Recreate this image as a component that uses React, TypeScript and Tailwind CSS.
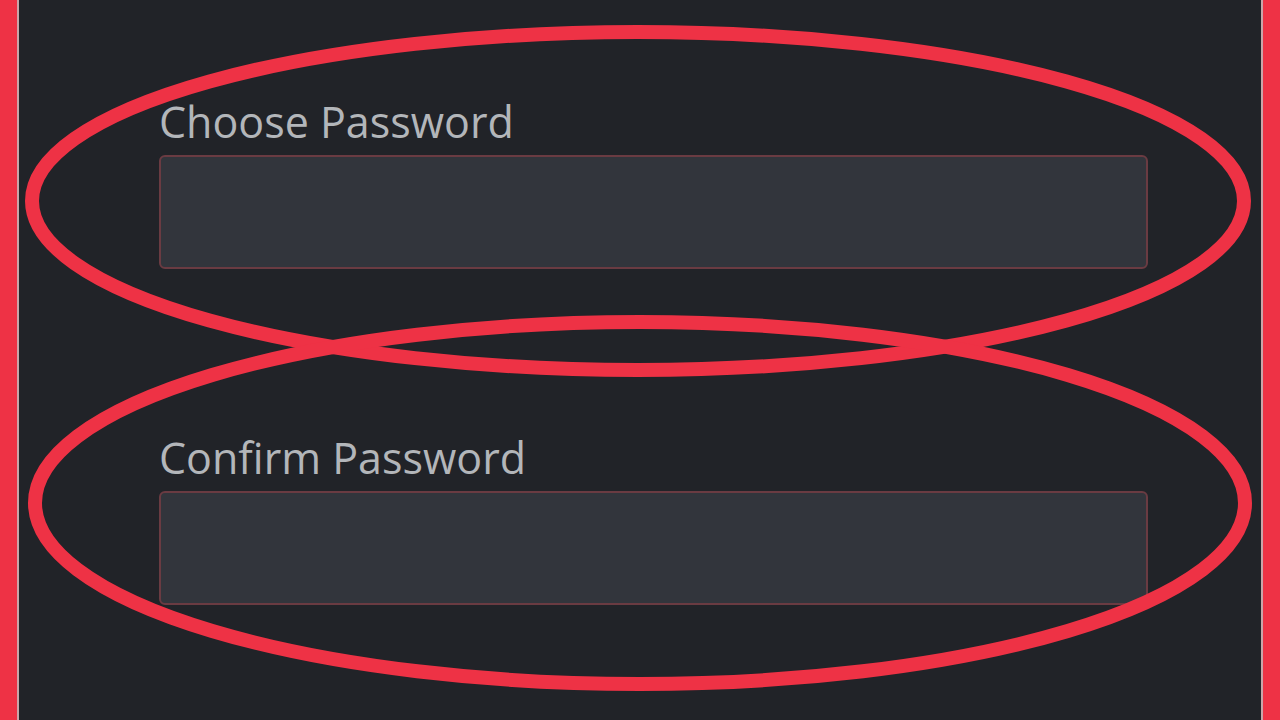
const Field = ({ label }: { label: string }) => (
  <div className="flex flex-col">
    <label className="text-[43px] leading-[48px] text-[#b3b6ba] font-['Open_Sans',sans-serif]">
      {label}
    </label>
    <div className="mt-[9px] h-[114px] w-[989px] rounded-[6px] border-2 border-[#6a3b42] bg-[#32353c]"></div>
  </div>
);

export default function App() {
  return (
    <div className="relative flex h-[720px] w-[1280px] overflow-hidden bg-[#212328]">
      {/* left frame */}
      <div className="w-[17px] bg-[#ee3245]"></div>
      <div className="w-[2px] bg-[#c9a5aa]"></div>

      {/* form */}
      <div className="flex flex-1 flex-col gap-[165px] pl-[140px] pt-[98px]">
        <Field label="Choose Password" />
        <Field label="Confirm Password" />
      </div>

      {/* right frame */}
      <div className="w-[2px] bg-[#c9a5aa]"></div>
      <div className="w-[17px] bg-[#ee3245]"></div>

      {/* highlight circles drawn over the screenshot */}
      <svg className="pointer-events-none absolute inset-0" width="1280" height="720" viewBox="0 0 1280 720">
        <ellipse cx="638" cy="201" rx="606" ry="169" fill="none" stroke="#ee3245" strokeWidth="14" />
        <ellipse cx="640" cy="503" rx="605" ry="181" fill="none" stroke="#ee3245" strokeWidth="14" />
      </svg>
    </div>
  );
}
